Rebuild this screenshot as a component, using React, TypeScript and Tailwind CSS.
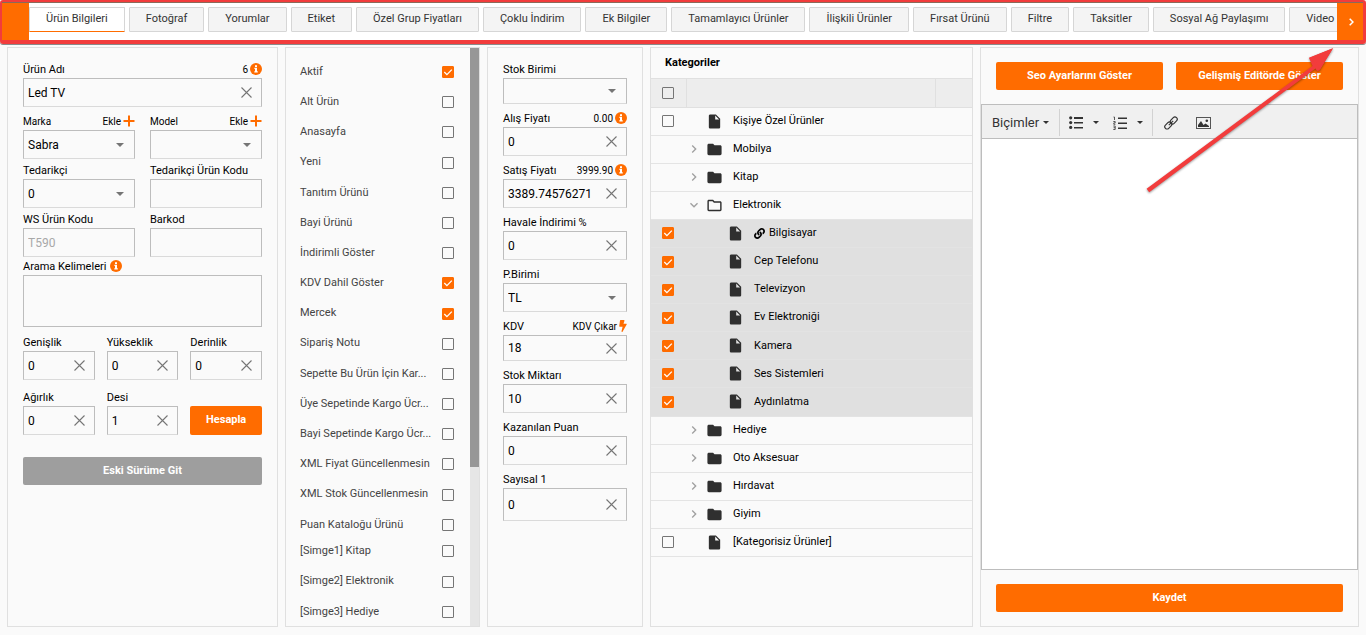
import { useId, useState } from 'react';
import type { ReactNode } from 'react';
import {
  MdChevronRight,
  MdExpandMore,
  MdFolder,
  MdInsertDriveFile,
  MdOutlineFolder,
} from 'react-icons/md';
import { FaBolt, FaLink } from 'react-icons/fa';

const tabs = [
  'Ürün Bilgileri',
  'Fotoğraf',
  'Yorumlar',
  'Etiket',
  'Özel Grup Fiyatları',
  'Çoklu İndirim',
  'Ek Bilgiler',
  'Tamamlayıcı Ürünler',
  'İlişkili Ürünler',
  'Fırsat Ürünü',
  'Filtre',
  'Taksitler',
  'Sosyal Ağ Paylaşımı',
  'Video',
];

const options = [
  { label: 'Aktif', checked: true },
  { label: 'Alt Ürün' },
  { label: 'Anasayfa' },
  { label: 'Yeni' },
  { label: 'Tanıtım Ürünü' },
  { label: 'Bayi Ürünü' },
  { label: 'İndirimli Göster' },
  { label: 'KDV Dahil Göster', checked: true },
  { label: 'Mercek', checked: true },
  { label: 'Sipariş Notu' },
  { label: 'Sepette Bu Ürün İçin Kar...' },
  { label: 'Üye Sepetinde Kargo Ücr...' },
  { label: 'Bayi Sepetinde Kargo Ücr...' },
  { label: 'XML Fiyat Güncellenmesin' },
  { label: 'XML Stok Güncellenmesin' },
  { label: 'Puan Kataloğu Ürünü' },
];

const badges = [
  { label: '[Simge1] Kitap' },
  { label: '[Simge2] Elektronik' },
  { label: '[Simge3] Hediye' },
];

type Category = {
  name: string;
  kind: 'file' | 'folder' | 'open';
  child?: boolean;
  linked?: boolean;
};

const categories: Category[] = [
  { name: 'Kişiye Özel Ürünler', kind: 'file' },
  { name: 'Mobilya', kind: 'folder' },
  { name: 'Kitap', kind: 'folder' },
  { name: 'Elektronik', kind: 'open' },
  { name: 'Bilgisayar', kind: 'file', child: true, linked: true },
  { name: 'Cep Telefonu', kind: 'file', child: true },
  { name: 'Televizyon', kind: 'file', child: true },
  { name: 'Ev Elektroniği', kind: 'file', child: true },
  { name: 'Kamera', kind: 'file', child: true },
  { name: 'Ses Sistemleri', kind: 'file', child: true },
  { name: 'Aydınlatma', kind: 'file', child: true },
  { name: 'Hediye', kind: 'folder' },
  { name: 'Oto Aksesuar', kind: 'folder' },
  { name: 'Hırdavat', kind: 'folder' },
  { name: 'Giyim', kind: 'folder' },
  { name: '[Kategorisiz Ürünler]', kind: 'file' },
];

function InfoIcon() {
  return (
    <svg viewBox="0 0 12 12" className="h-3 w-3 shrink-0">
      <circle cx="6" cy="6" r="6" fill="#ff6c00" />
      <path d="M5 2.200h2v1.700H5zM4.400 4.700H7v3.500h.8v1.300H4.300V8.200H5V6h-.6z" fill="#fff" />
    </svg>
  );
}

function PlusIcon() {
  return (
    <svg viewBox="0 0 12 12" className="h-3 w-3 shrink-0">
      <path d="M6 .5v11M.5 6h11" stroke="#ff6c00" strokeWidth="2" />
    </svg>
  );
}

function Checkbox({ id, checked = false, label }: { id?: string; checked?: boolean; label?: string }) {
  return (
    <span className="grid h-3 w-3 shrink-0">
      <input
        id={id}
        type="checkbox"
        defaultChecked={checked}
        aria-label={label}
        className="peer col-start-1 row-start-1 h-3 w-3 appearance-none rounded-[1px] border border-[#757575] checked:border-[#ff6c00] checked:bg-[#ff6c00]"
      />
      <svg
        viewBox="0 0 12 12"
        className="pointer-events-none invisible col-start-1 row-start-1 h-3 w-3 peer-checked:visible"
      >
        <path d="M2.3 6l2.6 2.6 4.9-5" fill="none" stroke="#fff" strokeWidth="1.3" />
      </svg>
    </span>
  );
}

const boxHeights = {
  short: 'h-[26px]',
  normal: 'h-[29px]',
  tall: 'h-[33px]',
};

type FieldProps = {
  label: string;
  small?: boolean;
  value?: string;
  size?: keyof typeof boxHeights;
  clearable?: boolean;
  select?: boolean;
  disabled?: boolean;
  extra?: ReactNode;
};

function Field({ label, small, value = '', size = 'normal', clearable, select, disabled, extra }: FieldProps) {
  const id = useId();
  const [text, setText] = useState(value);
  const box = `${boxHeights[size]} block w-full min-w-0 appearance-none border border-[#bdbdbd] border-b-[#dadada] bg-transparent pl-1 text-xs outline-none`;

  return (
    <div>
      <div className="flex h-[18px] items-center justify-between">
        <label htmlFor={id} className={small ? 'text-[10px]' : 'pt-[2px] text-[11px]'}>
          {label}
        </label>
        {extra}
      </div>
      <div className="relative flex items-center">
        {select ? (
          <select id={id} className={box}>
            <option>{value}</option>
          </select>
        ) : (
          <input
            id={id}
            value={text}
            disabled={disabled}
            onChange={(e) => setText(e.target.value)}
            className={`${box} disabled:text-[#a8a8a8]`}
          />
        )}
        {select && (
          <svg viewBox="0 0 8 4" className="pointer-events-none absolute right-[11px] h-1 w-2">
            <path d="M0 0h8L4 4z" fill="#757575" />
          </svg>
        )}
        {clearable && (
          <button
            type="button"
            aria-label={`${label} temizle`}
            onClick={() => setText('')}
            className="absolute right-[10px]"
          >
            <svg viewBox="0 0 11 11" className="h-[11px] w-[11px]">
              <path d="M.5.5l10 10M10.500.5l-10 10" stroke="#757575" strokeWidth="1.1" />
            </svg>
          </button>
        )}
      </div>
    </div>
  );
}

function Extra({ text, icon }: { text: string; icon: ReactNode }) {
  return (
    <span className="flex items-center gap-[2px] text-[10px]">
      {text}
      {icon}
    </span>
  );
}

function AddLink() {
  return (
    <a href="#ekle" className="flex items-center gap-[2px] text-[10px]">
      Ekle
      <PlusIcon />
    </a>
  );
}

function OptionRow({ label, checked }: { label: string; checked?: boolean }) {
  const id = useId();
  return (
    <div className="flex h-4 items-center justify-between">
      <label htmlFor={id} className="text-[11px] whitespace-nowrap text-[#444]">
        {label}
      </label>
      <Checkbox id={id} checked={checked} />
    </div>
  );
}

function CategoryIcon({ kind }: { kind: Category['kind'] }) {
  if (kind === 'folder') return <MdFolder className="h-[17px] w-[17px] text-[#2f2f2f]" />;
  if (kind === 'open') return <MdOutlineFolder className="h-[17px] w-[17px] text-[#2f2f2f]" />;
  return <MdInsertDriveFile className="h-[17px] w-[17px] text-[#2f2f2f]" />;
}

function CategoryRow({ name, kind, child, linked }: Category) {
  return (
    <tr className={child ? 'border-b border-[#e3e3e3] bg-[#e0e0e0]' : 'border-b border-[#e4e4e4]'}>
      <td className="pl-[11px]">{kind === 'file' && <Checkbox checked={child} label={name} />}</td>
      <td colSpan={2}>
        <div className="flex items-center">
          <span className={child ? 'w-[41px]' : 'w-5'}>
            {kind === 'folder' && <MdChevronRight className="h-4 w-4 text-[#a0a0a0]" />}
            {kind === 'open' && <MdExpandMore className="h-4 w-4 text-[#a0a0a0]" />}
          </span>
          <CategoryIcon kind={kind} />
          <span className="flex items-center gap-1 pl-[10px]">
            {linked && <FaLink className="h-[11px] w-[11px]" />}
            {name}
          </span>
        </div>
      </td>
    </tr>
  );
}

function Caret() {
  return (
    <svg viewBox="0 0 6 3" className="h-[3px] w-[6px]">
      <path d="M0 0h6L3 3z" fill="#333" />
    </svg>
  );
}

function EditorToolbar() {
  return (
    <div className="flex h-[34px] items-center border-b border-[#bdbdbd] bg-[#f0f0f0] pt-[2px] pl-[10px] text-[#333]">
      <button type="button" className="flex items-center gap-1 pr-[10px] text-[13px]">
        Biçimler
        <Caret />
      </button>
      <div className="flex h-[27px] items-center gap-[10px] border-l border-[#d2d2d2] px-[9px]">
        <button type="button" aria-label="Madde listesi" className="flex items-center gap-[10px]">
          <svg viewBox="0 0 14 13" className="h-[13px] w-[14px]" fill="#333">
            <path d="M5 1h9v2H5zM5 6h9v1.500H5zM5 11h9v1.500H5z" />
            <circle cx="1.700" cy="1.800" r="1.600" />
            <circle cx="1.700" cy="6.600" r="1.600" />
            <circle cx="1.700" cy="11.400" r="1.600" />
          </svg>
          <Caret />
        </button>
        <button type="button" aria-label="Numaralı liste" className="flex items-center gap-[10px] pl-1">
          <svg viewBox="0 0 14 14" className="h-[14px] w-[14px]" fill="#333">
            <path d="M5 1.500h9V3H5zM5 6.500h9V8H5zM5 11.500h9V13H5z" />
            <path
              d="M.5 1h1v3M.3 5.500h1.900v1.400H.8v1.400h1.600M.3 10h1.900v3.500H.3M.6 11.700h1.600"
              fill="none"
              stroke="#333"
              strokeWidth=".8"
            />
          </svg>
          <Caret />
        </button>
      </div>
      <div className="flex h-[27px] items-center gap-[18px] border-l border-[#d2d2d2] pl-[11px]">
        <button type="button" aria-label="Bağlantı ekle">
          <svg viewBox="0 0 14 14" className="h-[14px] w-[14px]" fill="none" stroke="#333" strokeWidth="1.2">
            <rect x="5.700" y="2.200" width="8" height="4.600" rx="2.300" transform="rotate(-45 9.700 4.500)" />
            <rect x=".3" y="7.200" width="8" height="4.600" rx="2.300" transform="rotate(-45 4.300 9.500)" />
            <path d="M4.800 9.200l4.400-4.400" />
          </svg>
        </button>
        <button type="button" aria-label="Resim ekle">
          <svg viewBox="0 0 15 12" className="h-3 w-[15px]">
            <rect x=".5" y=".5" width="14" height="11" fill="none" stroke="#555" />
            <path d="M2 10V8l3-4L7.500 8l2-1.500L13 9v1z" fill="#333" />
            <circle cx="10.800" cy="3.700" r="1.300" fill="#333" />
          </svg>
        </button>
      </div>
    </div>
  );
}

export default function App() {
  const primary = 'h-7 rounded-[2px] bg-[#ff6c00] text-[11px] font-bold text-white';

  return (
    <div className="relative flex h-screen min-h-[635px] flex-col overflow-hidden bg-[#fafafa] font-[Roboto,'Liberation_Sans',sans-serif] text-[11px] text-black">
      <header className="rounded-[3px] border-2 border-r-[3px] border-b-4 border-[#f23c3c] shadow-[0_1px_0_#8a8a8a]">
        <nav className="flex h-[38px] items-stretch border-t border-[#8a6a5a] bg-white">
          <span className="w-[27px] shrink-0 bg-[#ff6c00]" />
          <div className="flex min-w-0 flex-1 items-start gap-1 overflow-hidden pt-1">
            {tabs.map((tab, i) => (
              <button
                key={tab}
                type="button"
                className={
                  i === 0
                    ? 'h-[25px] shrink-0 rounded-[1px] border border-[#d6d6d6] border-b-[#ff6c00] bg-white px-4 text-[#333]'
                    : 'h-[25px] shrink-0 rounded-[1px] border border-[#d6d6d6] bg-[#f4f4f4] px-4 text-[#333]'
                }
              >
                {tab}
              </button>
            ))}
          </div>
          <button
            type="button"
            aria-label="Sonraki sekmeler"
            className="flex w-[26px] shrink-0 items-center justify-center bg-[#ff6c00] pl-[3px] text-white"
          >
            <svg viewBox="0 0 5 8" className="h-2 w-[5px]">
              <path d="M.7.7L4 4 .7 7.300" fill="none" stroke="#fff" strokeWidth="1.500" />
            </svg>
          </button>
        </nav>
      </header>

      <main className="grid min-h-0 flex-1 grid-cols-[271fr_195fr_156fr_323fr_379fr] gap-[7px] px-[7px] pt-[3px] pb-2">
        <section className="min-w-0 border border-[#e0e0e0] px-[15px] pt-3">
          <Field label="Ürün Adı" value="Led TV" clearable extra={<Extra text="6" icon={<InfoIcon />} />} />
          <div className="mt-[5px] grid grid-cols-2 gap-x-[15px] gap-y-[2px]">
            <Field label="Marka" small select value="Sabra" extra={<AddLink />} />
            <Field label="Model" small select extra={<AddLink />} />
            <Field label="Tedarikçi" select value="0" />
            <Field label="Tedarikçi Ürün Kodu" />
            <Field label="WS Ürün Kodu" value="T590" disabled />
            <Field label="Barkod" />
          </div>
          <div className="flex h-[18px] items-center gap-1">
            <label htmlFor="keywords" className="pt-[2px]">
              Arama Kelimeleri
            </label>
            <InfoIcon />
          </div>
          <textarea
            id="keywords"
            className="block h-[52px] w-full resize-none border border-[#bdbdbd] bg-transparent p-1 text-xs outline-none"
          />
          <div className="mt-[6px] grid grid-cols-3 items-end gap-x-3 gap-y-2">
            <Field label="Genişlik" value="0" clearable />
            <Field label="Yükseklik" value="0" clearable />
            <Field label="Derinlik" value="0" clearable />
            <Field label="Ağırlık" value="0" clearable />
            <Field label="Desi" value="1" clearable />
            <button type="button" className="h-[29px] rounded-[2px] bg-[#ff6c00] font-bold text-white">
              Hesapla
            </button>
          </div>
          <button
            type="button"
            className="mt-[22px] h-7 w-full rounded-[2px] bg-[#9e9e9e] font-bold text-white"
          >
            Eski Sürüme Git
          </button>
        </section>

        <section className="flex min-h-0 min-w-0 border border-[#e0e0e0]">
          <div className="min-w-0 flex-1 overflow-hidden pt-4 pr-4 pl-[14px]">
            <div className="flex h-[469px] flex-col justify-between">
              {options.map((option) => (
                <OptionRow key={option.label} {...option} />
              ))}
            </div>
            <div className="mt-[10px] flex h-[77px] flex-col justify-between">
              {badges.map((badge) => (
                <OptionRow key={badge.label} {...badge} />
              ))}
            </div>
          </div>
          <div className="flex w-[9px] flex-col bg-[#e6e6e6]">
            <div className="flex-[29] bg-[#979797]" />
            <div className="flex-[11]" />
          </div>
        </section>

        <section className="flex min-w-0 flex-col gap-[5px] border border-[#e0e0e0] px-[15px] pt-3">
          <Field label="Stok Birimi" select size="short" />
          <Field label="Alış Fiyatı" value="0" clearable extra={<Extra text="0.00" icon={<InfoIcon />} />} />
          <Field
            label="Satış Fiyatı"
            value="3389.74576271"
            clearable
            extra={<Extra text="3999.90" icon={<InfoIcon />} />}
          />
          <Field label="Havale İndirimi %" value="0" clearable />
          <Field label="P.Birimi" select value="TL" />
          <Field
            label="KDV"
            value="18"
            size="short"
            clearable
            extra={<Extra text="KDV Çıkar" icon={<FaBolt className="h-3 w-2 text-[#ff6c00]" />} />}
          />
          <Field label="Stok Miktarı" value="10" clearable />
          <Field label="Kazanılan Puan" value="0" clearable />
          <Field label="Sayısal 1" value="0" size="tall" clearable />
        </section>

        <section className="min-w-0 border border-[#e0e0e0]">
          <h2 className="h-[31px] border-b border-[#e0e0e0] pl-[14px] text-[11px] leading-[30px] font-bold">
            Kategoriler
          </h2>
          <table className="h-[478px] w-full table-fixed border-collapse">
            <colgroup>
              <col className="w-[35px]" />
              <col />
              <col className="w-[37px]" />
            </colgroup>
            <thead>
              <tr className="h-7 border-b border-[#e0e0e0] bg-[#ededed]">
                <th className="border-r border-[#e0e0e0] pl-[11px]">
                  <Checkbox label="Tümünü seç" />
                </th>
                <th className="border-r border-[#e0e0e0]" />
                <th />
              </tr>
            </thead>
            <tbody>
              {categories.map((category) => (
                <CategoryRow key={category.name} {...category} />
              ))}
            </tbody>
          </table>
        </section>

        <section className="flex min-w-0 flex-col border border-[#e0e0e0]">
          <div className="grid grid-cols-2 gap-[13px] px-[15px] py-[14px]">
            <button type="button" className={primary}>
              Seo Ayarlarını Göster
            </button>
            <button type="button" className={primary}>
              Gelişmiş Editörde Göster
            </button>
          </div>
          <div className="flex min-h-0 flex-1 flex-col border border-[#bdbdbd] bg-white">
            <EditorToolbar />
            <textarea aria-label="Açıklama" className="block w-full flex-1 resize-none p-2 text-xs outline-none" />
          </div>
          <div className="px-[15px] py-[14px]">
            <button type="button" className={`${primary} w-full`}>
              Kaydet
            </button>
          </div>
        </section>
      </main>

      {/* callout arrow pointing at the "next tabs" button */}
      <svg
        viewBox="0 0 190 146"
        className="pointer-events-none absolute top-[47px] right-[32px] h-[146px] w-[190px] drop-shadow-[0_1px_1px_rgba(0,0,0,0.4)]"
      >
        <path
          d="M5.200 145.300L2.600 141.700 168.500 19 165 11 189 1.200 175.300 23.500 173 24 171.500 21.500z"
          fill="#f23c3c"
        />
        <path d="M165 10.800L189 1.200 176 22.500 172.500 16z" fill="#f23c3c" />
      </svg>
    </div>
  );
}
